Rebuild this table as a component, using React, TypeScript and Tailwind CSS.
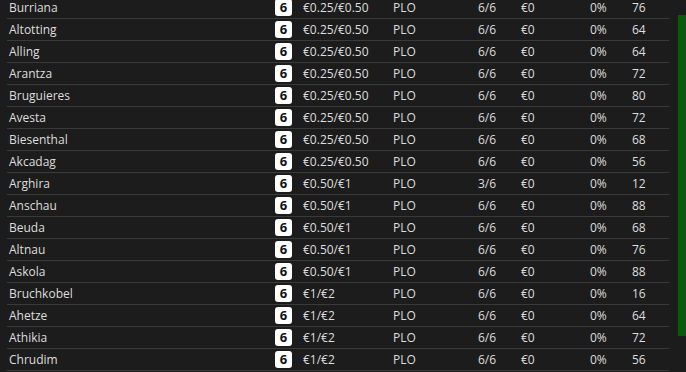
const rows: [string, string, string, string][] = [
  ['Burriana', '€0.25/€0.50', '6/6', '76'],
  ['Altotting', '€0.25/€0.50', '6/6', '64'],
  ['Alling', '€0.25/€0.50', '6/6', '64'],
  ['Arantza', '€0.25/€0.50', '6/6', '72'],
  ['Bruguieres', '€0.25/€0.50', '6/6', '80'],
  ['Avesta', '€0.25/€0.50', '6/6', '72'],
  ['Biesenthal', '€0.25/€0.50', '6/6', '68'],
  ['Akcadag', '€0.25/€0.50', '6/6', '56'],
  ['Arghira', '€0.50/€1', '3/6', '12'],
  ['Anschau', '€0.50/€1', '6/6', '88'],
  ['Beuda', '€0.50/€1', '6/6', '68'],
  ['Altnau', '€0.50/€1', '6/6', '76'],
  ['Askola', '€0.50/€1', '6/6', '88'],
  ['Bruchkobel', '€1/€2', '6/6', '16'],
  ['Ahetze', '€1/€2', '6/6', '64'],
  ['Athikia', '€1/€2', '6/6', '72'],
  ['Chrudim', '€1/€2', '6/6', '56'],
]

export default function App() {
  return (
    <div
      className="relative h-[372px] w-[686px] overflow-hidden bg-[#1c1c1c] text-[12px] text-[#dedede]"
      style={{ fontFamily: '"Open Sans", "Liberation Sans", sans-serif' }}
    >
      <div className="-mt-[3px] ml-[7px] w-[662px]">
        {rows.map(([name, stakes, seats, avg]) => (
          <div key={name} className="flex h-[22px] items-center border-b border-[#3a3a3a] pl-[2px]">
            <span className="w-[266px]">{name}</span>
            <span className="flex h-[17px] w-[17px] items-center justify-center rounded-[3px] bg-white text-[13px] font-bold text-[#111]">
              6
            </span>
            <span className="ml-[11px] w-[90px]">{stakes}</span>
            <span className="w-[85px]">PLO</span>
            <span className="w-[43px]">{seats}</span>
            <span className="w-[69px]">€0</span>
            <span className="w-[42px]">0%</span>
            <span>{avg}</span>
          </div>
        ))}
      </div>
      <div className="absolute right-0 top-[15px] h-[321px] w-[8px] bg-[#0b5a0b]" />
    </div>
  )
}
